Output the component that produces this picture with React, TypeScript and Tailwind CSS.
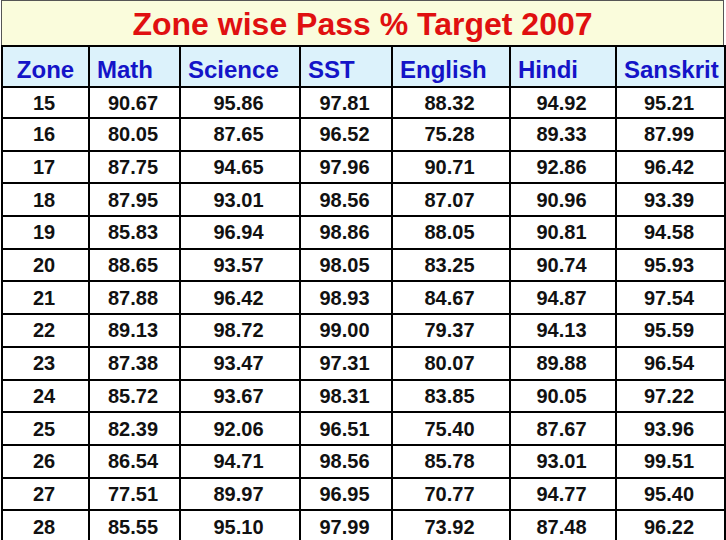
import * as React from 'react';

const subjects = ['Math', 'Science', 'SST', 'English', 'Hindi', 'Sanskrit'];

const rows: [string, string[]][] = [
  ['15', ['90.67', '95.86', '97.81', '88.32', '94.92', '95.21']],
  ['16', ['80.05', '87.65', '96.52', '75.28', '89.33', '87.99']],
  ['17', ['87.75', '94.65', '97.96', '90.71', '92.86', '96.42']],
  ['18', ['87.95', '93.01', '98.56', '87.07', '90.96', '93.39']],
  ['19', ['85.83', '96.94', '98.86', '88.05', '90.81', '94.58']],
  ['20', ['88.65', '93.57', '98.05', '83.25', '90.74', '95.93']],
  ['21', ['87.88', '96.42', '98.93', '84.67', '94.87', '97.54']],
  ['22', ['89.13', '98.72', '99.00', '79.37', '94.13', '95.59']],
  ['23', ['87.38', '93.47', '97.31', '80.07', '89.88', '96.54']],
  ['24', ['85.72', '93.67', '98.31', '83.85', '90.05', '97.22']],
  ['25', ['82.39', '92.06', '96.51', '75.40', '87.67', '93.96']],
  ['26', ['86.54', '94.71', '98.56', '85.78', '93.01', '99.51']],
  ['27', ['77.51', '89.97', '96.95', '70.77', '94.77', '95.40']],
  ['28', ['85.55', '95.10', '97.99', '73.92', '87.48', '96.22']],
];

const widths = ['w-[87px]', 'w-[91px]', 'w-[120px]', 'w-[92px]', 'w-[118px]', 'w-[106px]', 'w-[109px]'];

export default function App() {
  return (
    <div className="h-[540px] w-[726px] overflow-hidden bg-white font-['Liberation_Sans',Arial,sans-serif]">
      <div className="ml-px flex h-[45px] w-[723px] items-center justify-center border border-b-0 border-[#555] bg-[#fafcdc] pt-px">
        <h1 className="text-[32px] font-bold leading-none text-[#e01010]">Zone wise Pass % Target 2007</h1>
      </div>
      <table className="ml-px w-[723px] table-fixed border-collapse">
        <colgroup>
          {widths.map((w, i) => (
            <col key={i} className={w} />
          ))}
        </colgroup>
        <thead>
          <tr className="h-[41px] bg-[#dcf2fb]">
            <th className="border-2 border-black pt-[7px] text-center align-middle text-[24px] font-bold leading-none text-[#1414c8]">
              Zone
            </th>
            {subjects.map((s) => (
              <th
                key={s}
                className="border-2 border-black pl-[7px] pt-[7px] text-left align-middle text-[24px] font-bold leading-none text-[#1414c8]"
              >
                {s}
              </th>
            ))}
          </tr>
        </thead>
        <tbody>
          {rows.map(([zone, vals], r) => (
            <tr key={zone} className={r === 0 ? 'h-[31px]' : 'h-[32.7px]'}>
              <td className="border-2 border-black pr-[3px] text-center align-middle text-[20px] font-bold leading-none text-[#111]">
                {zone}
              </td>
              {vals.map((v, i) => (
                <td
                  key={i}
                  className="border-2 border-black pr-[3px] text-center align-middle text-[20px] font-bold leading-none text-[#111]"
                >
                  {v}
                </td>
              ))}
            </tr>
          ))}
        </tbody>
      </table>
    </div>
  );
}
